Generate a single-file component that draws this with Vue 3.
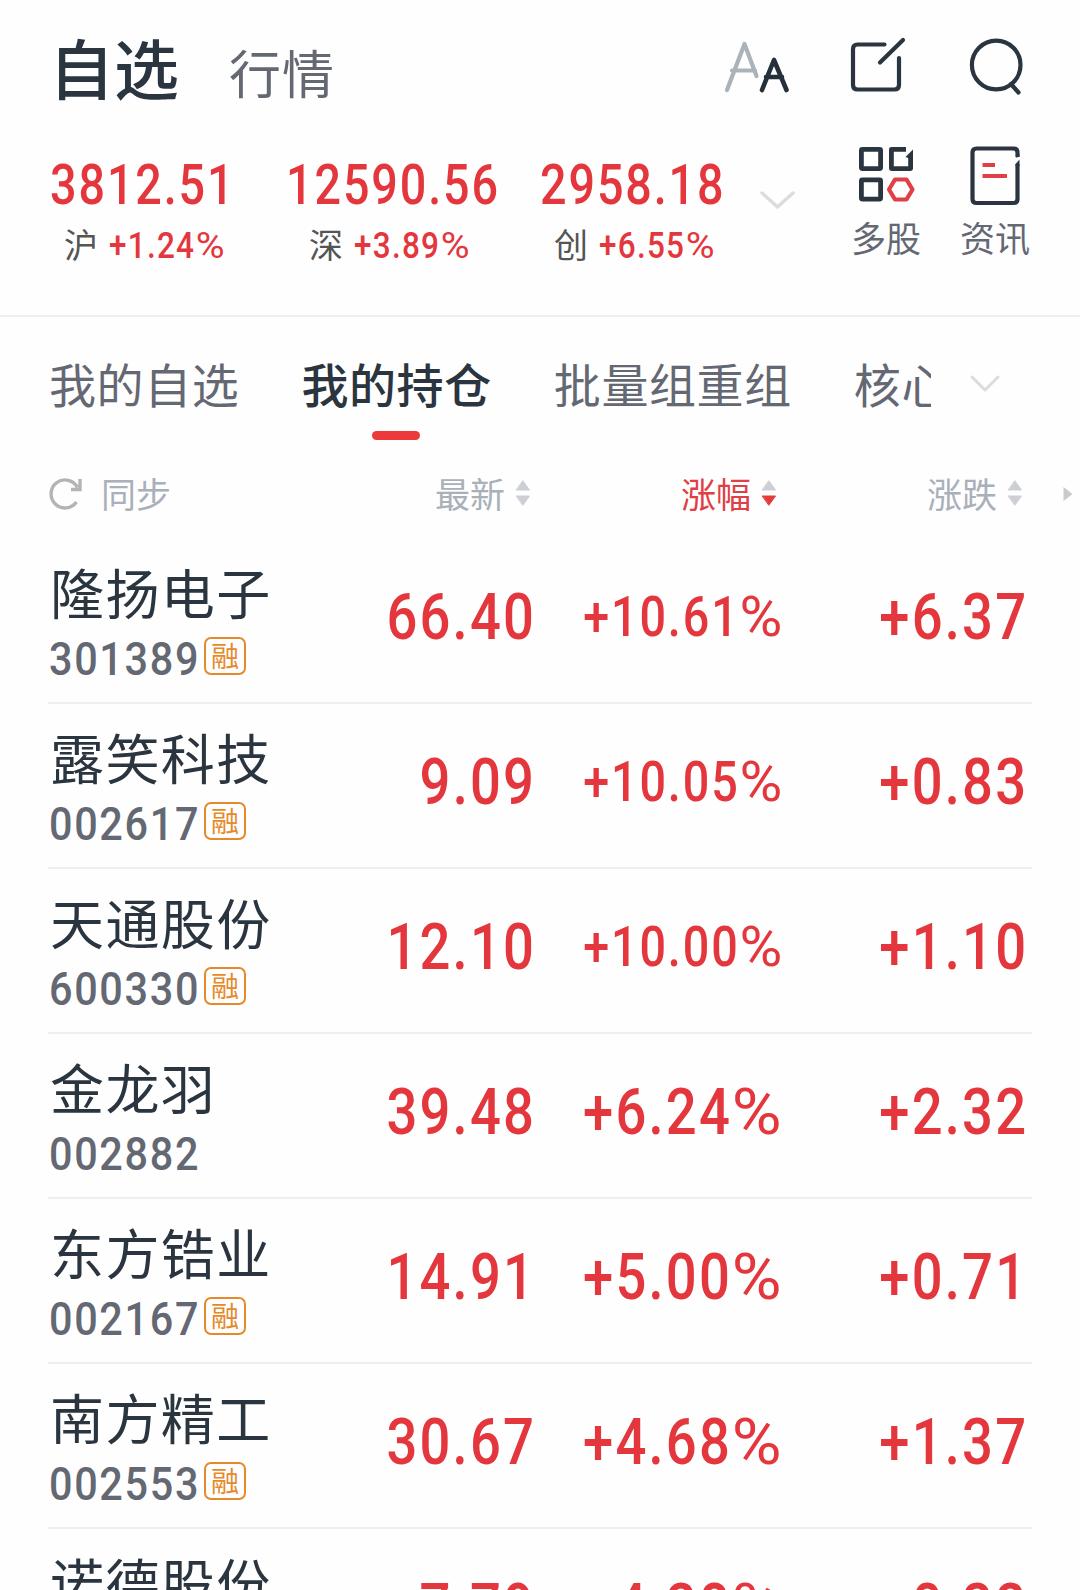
<script setup>
const indices = [
  { value: '3812.51', name: '沪', pct: '+1.24', w: 236, indent: 14 },
  { value: '12590.56', name: '深', pct: '+3.89', w: 254, indent: 23 },
  { value: '2958.18', name: '创', pct: '+6.55', w: 219, indent: 14 },
]
const rows = [
  { name: '隆扬电子', code: '301389', margin: true, price: '66.40', pct: '+10.61', chg: '+6.37' },
  { name: '露笑科技', code: '002617', margin: true, price: '9.09', pct: '+10.05', chg: '+0.83' },
  { name: '天通股份', code: '600330', margin: true, price: '12.10', pct: '+10.00', chg: '+1.10' },
  { name: '金龙羽', code: '002882', margin: false, price: '39.48', pct: '+6.24', chg: '+2.32' },
  { name: '东方锆业', code: '002167', margin: true, price: '14.91', pct: '+5.00', chg: '+0.71' },
  { name: '南方精工', code: '002553', margin: true, price: '30.67', pct: '+4.68', chg: '+1.37' },
  { name: '诺德股份', code: '', margin: false, price: '7.79', pct: '+4.28', chg: '+0.32' },
]
const columns = [
  { label: '最新', active: false },
  { label: '涨幅', active: true },
  { label: '涨跌', active: false },
]
</script>

<template>
  <div class="page">
    <header class="top">
      <h1 class="title">自选</h1>
      <span class="sub">行情</span>
      <div class="tools">
        <svg width="66" height="60" viewBox="724 36 66 60">
          <path d="M727 90L744.500 44L756.500 76M732 70.500H755" stroke="#a9b3b9" />
          <path d="M762 90L774 60L786.500 90M766 77H782" stroke="#26303a" stroke-width="4.600" />
        </svg>
        <svg width="58" height="60" viewBox="850.500 36 58 60">
          <path d="M885 44.500H858Q853.500 44.500 853.500 49V85Q853.500 89.500 858 89.500H895Q899.500 89.500 899.500 85V58M880.500 62.500L903.500 40" stroke="#2a3540" />
        </svg>
        <svg width="58" height="60" viewBox="968 36 58 60">
          <circle cx="996.200" cy="65" r="24.300" stroke="#2a3540" />
          <path d="M1011 84L1018.500 92.500" stroke="#2a3540" />
        </svg>
      </div>
    </header>

    <section class="market">
      <div v-for="i in indices" :key="i.name" class="index" :style="{ width: i.w + 'px' }">
        <span class="num index-value">{{ i.value }}</span>
        <div class="index-sub" :style="{ paddingLeft: i.indent + 'px' }">
          <span class="index-name">{{ i.name }}</span>
          <span class="num index-pct">{{ i.pct }}<span class="percent">%</span></span>
        </div>
      </div>
      <svg class="more" width="36" height="20" viewBox="0 0 36 20">
        <path d="M3 3L18.500 17L34 3" stroke="#dcdcdc" stroke-width="3.500" />
      </svg>
      <div class="shortcuts">
        <div class="shortcut">
          <svg width="60" height="64" viewBox="857 143 60 64">
            <g stroke="#2a3540" stroke-width="4.800">
              <rect x="862.400" y="149.400" width="19.200" height="19.200" rx="1" />
              <path d="M907 149.400H892.400V168.600H911.600V155" stroke-linecap="butt" />
              <rect x="862.400" y="179.900" width="19.200" height="19.200" rx="1" />
            </g>
            <path d="M906.500 157L914 149.500V158H909.200Z" fill="#2a3540" stroke="none" />
            <path d="M896 179.500H907.500L913.500 189.500L907.500 199.500H896L890 189.500Z" stroke="#e04045" />
          </svg>
          <span>多股</span>
        </div>
        <div class="shortcut">
          <svg width="60" height="64" viewBox="966 143 60 64">
            <path d="M1018.500 157V152.500Q1018.500 148.500 1014.500 148.500H977.500Q973.500 148.500 973.500 152.500V199Q973.500 203 977.500 203H1014.500Q1018.500 203 1018.500 199V164" stroke="#2a3540" stroke-linecap="butt" />
            <path d="M1016.500 158.500L1020.500 154V156ZM1016.500 166V164L1020.500 159.500V166Z" fill="#2a3540" stroke="none" />
            <path d="M983.500 165H996M983.500 176H1008" stroke="#e04045" stroke-linecap="butt" />
          </svg>
          <span>资讯</span>
        </div>
      </div>
    </section>

    <nav class="tabs">
      <span class="tab">我的自选</span>
      <span class="tab active">我的持仓</span>
      <span class="tab">批量组重组</span>
      <span class="tab clipped">核心</span>
      <svg class="tab-more" width="30" height="20" viewBox="0 0 30 20">
        <path d="M2 3L15 16L28 3" stroke="#dcdcdc" stroke-width="3" />
      </svg>
    </nav>

    <div class="grid head">
      <div class="sync">
        <svg width="34" height="34" viewBox="0 0 34 34">
          <path d="M27.500 26A14 14 0 1 1 28.500 11.500M31 3V13.500H22" stroke="#b4b4b6" stroke-width="3.400" stroke-linecap="butt" stroke-linejoin="miter" />
        </svg>
        <span>同步</span>
      </div>
      <div v-for="c in columns" :key="c.label" class="col" :class="{ sorted: c.active }">
        <span>{{ c.label }}</span>
        <svg width="16" height="26" viewBox="0 0 16 26">
          <path d="M8 1L14.500 10H1.500Z" fill="#cccfd4" stroke="#cccfd4" stroke-width="1" />
          <path d="M8 25L14.500 16H1.500Z" :fill="c.active ? '#e43a3c' : '#cccfd4'" :stroke="c.active ? '#e43a3c' : '#cccfd4'" stroke-width="1" />
        </svg>
      </div>
      <svg class="scroll-hint" width="10" height="14" viewBox="0 0 10 14">
        <path d="M0.500 0L9.500 7L0.500 14Z" fill="#cacaca" stroke="none" />
      </svg>
    </div>

    <main class="list">
      <div v-for="r in rows" :key="r.name" class="grid row">
        <div class="stock">
          <div class="name">{{ r.name }}</div>
          <div v-if="r.code" class="meta">
            <span class="num code">{{ r.code }}</span>
            <span v-if="r.margin" class="badge">融</span>
          </div>
        </div>
        <div class="cell"><span class="num big">{{ r.price }}</span></div>
        <div class="cell">
          <span class="num" :class="r.pct.length > 5 ? 'mid' : 'big'">{{ r.pct }}<span class="percent">%</span></span>
        </div>
        <div class="cell"><span class="num big">{{ r.chg }}</span></div>
      </div>
    </main>
  </div>
</template>

<style>
body {
  background: #fefefe;
}
</style>

<style scoped>
.page {
  width: 1080px;
  height: 1590px;
  overflow: hidden;
  background: #fefefe;
  color: #2a3540;
  font-family: "Noto Sans CJK SC", sans-serif;
}
svg {
  display: block;
  flex: none;
  fill: none;
  stroke-width: 4.2;
  stroke-linecap: round;
  stroke-linejoin: round;
}
.num {
  display: inline-block;
  font-family: Roboto, "Noto Sans CJK SC", sans-serif;
  font-weight: 500;
  color: #e4363d;
  white-space: nowrap;
  letter-spacing: 0.04em;
  transform: scaleX(0.85);
  transform-origin: left;
}
.percent {
  display: inline-block;
  font-weight: 400;
  letter-spacing: 0;
  transform: scaleX(1.25);
  transform-origin: left;
  margin-right: 0.18em;
}
.top {
  display: flex;
  height: 140px;
}
.title {
  margin: 20px 0 0 49px;
  font-size: 65px;
  line-height: 92px;
  font-weight: 500;
}
.sub {
  margin: 35px 0 0 50px;
  font-size: 52px;
  line-height: 74px;
  letter-spacing: 1px;
  color: #646873;
}
.tools {
  display: flex;
  margin: 36px 54px 0 auto;
}
.tools svg + svg {
  margin-left: 60px;
}
.market {
  display: flex;
  box-sizing: border-box;
  height: 177px;
  padding-left: 50px;
  border-bottom: 2px solid #efefef;
}
.index {
  flex: none;
  padding-top: 12px;
}
.index-value {
  height: 66px;
  font-size: 55px;
  line-height: 66px;
}
.index-sub {
  display: flex;
  height: 50px;
  margin-top: 2px;
}
.index-name {
  width: 45px;
  font-size: 34px;
  line-height: 48px;
  color: #555;
}
.index-pct {
  font-size: 36px;
  line-height: 52px;
  transform: scaleX(0.875);
}
.more {
  margin-top: 50px;
}
.shortcuts {
  display: flex;
  gap: 39px;
  margin: 3px 0 0 auto;
  padding-right: 50px;
}
.shortcut {
  width: 70px;
  display: flex;
  flex-direction: column;
  align-items: center;
  font-size: 35px;
  line-height: 50px;
  color: #646873;
}
.shortcut span {
  margin-top: 5px;
}
.tabs {
  display: flex;
  height: 130px;
  padding: 32px 0 0 49px;
  box-sizing: border-box;
  font-size: 47px;
  line-height: 68px;
  letter-spacing: 0.6px;
  color: #646873;
}
.tab {
  position: relative;
  flex: none;
  height: 68px;
  margin-right: 62px;
  white-space: nowrap;
}
.active {
  color: #2a3540;
  font-weight: 500;
}
.active::after {
  content: "";
  position: absolute;
  left: 71px;
  top: 82px;
  width: 48px;
  height: 9px;
  border-radius: 5px;
  background: #ec3a3a;
}
.clipped {
  width: 77px;
  margin-right: 39px;
  overflow: hidden;
}
.tab-more {
  margin-top: 25px;
}
.grid {
  display: grid;
  grid-template-columns: 236px 248px 246px 246px;
}
.head {
  position: relative;
  height: 92px;
  padding-left: 49px;
  font-size: 35px;
  line-height: 50px;
  color: #a9b0b9;
}
.sync {
  display: flex;
  gap: 18px;
  padding-top: 21px;
}
.sync svg {
  margin-top: 8px;
}
.col {
  display: flex;
  justify-content: flex-end;
  gap: 10px;
  padding: 21px 2px 0 0;
}
.col svg {
  margin-top: 12px;
}
.sorted {
  color: #e04045;
}
.scroll-hint {
  position: absolute;
  left: 1063px;
  top: 40px;
}
.row {
  box-sizing: border-box;
  width: 984px;
  height: 165px;
  margin-left: 48px;
  border-bottom: 2px solid #efefef;
}
.name {
  height: 80px;
  padding: 13px 0 0 2px;
  box-sizing: border-box;
  font-size: 54px;
  line-height: 80px;
  letter-spacing: 1.4px;
  white-space: nowrap;
}
.meta {
  display: flex;
  margin-top: 15px;
}
.code {
  width: 155px;
  margin: -2px 0 0 1px;
  font-size: 46.5px;
  line-height: 54px;
  color: #646873;
  transform: scaleX(0.89);
}
.badge {
  box-sizing: border-box;
  width: 42px;
  height: 38px;
  margin-top: 3px;
  border: 2px solid #e58a2a;
  border-radius: 7px;
  font-size: 28px;
  line-height: 33px;
  text-align: center;
  color: #e58a2a;
}
.cell {
  display: flex;
  justify-content: flex-end;
}
.cell .num {
  margin-right: -4px;
  transform-origin: right;
}
.big {
  font-size: 64px;
  line-height: 157px;
}
.mid {
  font-size: 55px;
  line-height: 157px;
}
</style>
